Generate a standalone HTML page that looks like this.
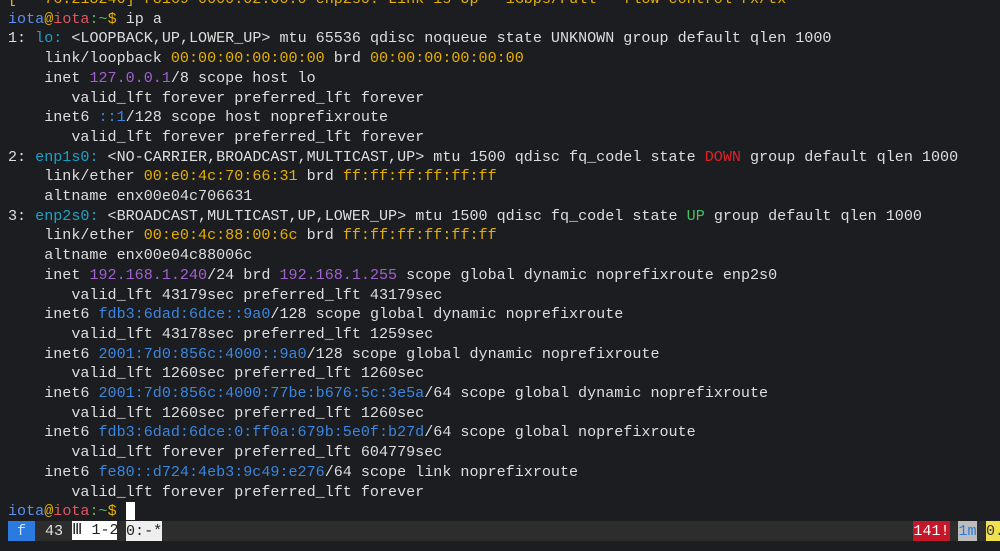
<!DOCTYPE html>
<html><head><meta charset="utf-8"><style>
html,body{margin:0;padding:0;background:#1c1d20;width:1000px;height:551px;overflow:hidden}
#t{position:absolute;left:8px;top:-10px;font-family:"Liberation Mono","DejaVu Sans Mono",monospace;font-size:15.08px;line-height:19.7px;color:#dedede;white-space:pre}
.b{color:#5b8ff0}.y{color:#e6b000}.r{color:#e05561}.g{color:#5fb35f}.c{color:#1aa2c4}.p{color:#a060d0}.l{color:#3a86e0}.d{color:#e0202a}.u{color:#4cc060}
#bar{position:absolute;left:8px;top:521px;width:992px;height:20px;background:#2d2d2d}
.s{position:absolute;top:521px;height:20px;line-height:20px;font-family:"Liberation Mono",monospace;font-size:15.08px;white-space:pre}
</style></head><body>
<div id="t"><span class="y">[   76.218240] r8169 0000:02:00.0 enp2s0: Link is Up - 1Gbps/Full - flow control rx/tx</span>
<span class="b">iota</span><span class="y">@</span><span class="r">iota</span><span class="g">:~</span><span class="y">$</span> ip a
1: <span class="c">lo:</span> &lt;LOOPBACK,UP,LOWER_UP&gt; mtu 65536 qdisc noqueue state UNKNOWN group default qlen 1000
    link/loopback <span class="y">00:00:00:00:00:00</span> brd <span class="y">00:00:00:00:00:00</span>
    inet <span class="p">127.0.0.1</span>/8 scope host lo
       valid_lft forever preferred_lft forever
    inet6 <span class="l">::1</span>/128 scope host noprefixroute
       valid_lft forever preferred_lft forever
2: <span class="c">enp1s0:</span> &lt;NO-CARRIER,BROADCAST,MULTICAST,UP&gt; mtu 1500 qdisc fq_codel state <span class="d">DOWN</span> group default qlen 1000
    link/ether <span class="y">00:e0:4c:70:66:31</span> brd <span class="y">ff:ff:ff:ff:ff:ff</span>
    altname enx00e04c706631
3: <span class="c">enp2s0:</span> &lt;BROADCAST,MULTICAST,UP,LOWER_UP&gt; mtu 1500 qdisc fq_codel state <span class="u">UP</span> group default qlen 1000
    link/ether <span class="y">00:e0:4c:88:00:6c</span> brd <span class="y">ff:ff:ff:ff:ff:ff</span>
    altname enx00e04c88006c
    inet <span class="p">192.168.1.240</span>/24 brd <span class="p">192.168.1.255</span> scope global dynamic noprefixroute enp2s0
       valid_lft 43179sec preferred_lft 43179sec
    inet6 <span class="l">fdb3:6dad:6dce::9a0</span>/128 scope global dynamic noprefixroute
       valid_lft 43178sec preferred_lft 1259sec
    inet6 <span class="l">2001:7d0:856c:4000::9a0</span>/128 scope global dynamic noprefixroute
       valid_lft 1260sec preferred_lft 1260sec
    inet6 <span class="l">2001:7d0:856c:4000:77be:b676:5c:3e5a</span>/64 scope global dynamic noprefixroute
       valid_lft 1260sec preferred_lft 1260sec
    inet6 <span class="l">fdb3:6dad:6dce:0:ff0a:679b:5e0f:b27d</span>/64 scope global noprefixroute
       valid_lft forever preferred_lft 604779sec
    inet6 <span class="l">fe80::d724:4eb3:9c49:e276</span>/64 scope link noprefixroute
       valid_lft forever preferred_lft forever
<span class="b">iota</span><span class="y">@</span><span class="r">iota</span><span class="g">:~</span><span class="y">$</span> <span style="background:#fff">&nbsp;</span></div>
<div id="bar"></div>
<div class="s" style="left:8px;width:27px;background:#2a7ae0;color:#cfe0ff;text-align:center">f</div>
<div class="s" style="left:45px;color:#e0e0e0">43</div>
<div class="s" style="left:72px;width:45px;background:#fff;color:#222;border-bottom:1px solid #222;height:19px;line-height:19px">Ⅲ 1-2</div>
<div class="s" style="left:126px;width:36px;background:#eee;color:#222">0:-*</div>
<div class="s" style="left:913px;width:37px;background:#c4182a;color:#fff;text-align:center">141!</div>
<div class="s" style="left:958px;width:19px;background:#bdbdbd;color:#2a7ae0;text-align:center">1m</div>
<div class="s" style="left:986px;width:14px;background:#f0e050;color:#333">0.</div>
</body></html>
